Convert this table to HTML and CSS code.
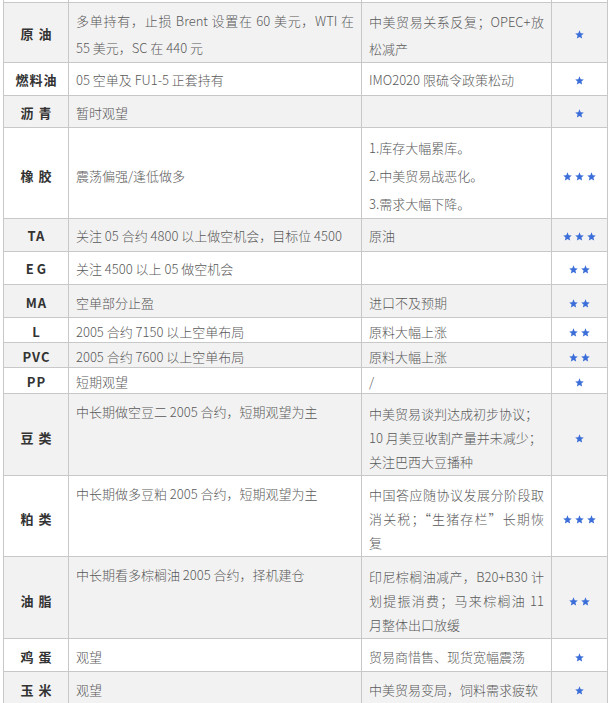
FILE: index.html
```html
<!DOCTYPE html>
<html lang="zh-CN">
<head>
<meta charset="utf-8">
<title>策略表</title>
<link rel="stylesheet" href="styles.css">
</head>
<body>
<svg class="defs" width="0" height="0" aria-hidden="true">
  <defs>
    <path id="star" d="M5 0.4 L6.35 3.55 L9.75 3.85 L7.15 6.1 L7.95 9.45 L5 7.7 L2.05 9.45 L2.85 6.1 L0.25 3.85 L3.65 3.55 Z"/>
  </defs>
</svg>
<table class="grid">
  <colgroup>
    <col class="c-name"><col class="c-plan"><col class="c-reason"><col class="c-rate">
  </colgroup>
  <tbody>
    <tr class="row cut"><td></td><td></td><td></td><td></td></tr>

    <tr class="row alt h60">
      <td class="name">原 油</td>
      <td class="txt lh27">多单持有，止损 Brent 设置在 60 美元，WTI 在 55 美元，SC 在 440 元</td>
      <td class="txt lh27 push">中美贸易关系反复；OPEC+放松减产</td>
      <td class="rate"><span class="stars"><svg viewBox="0 0 10 10"><use href="#star"/></svg></span></td>
    </tr>
    <tr class="row h33">
      <td class="name">燃料油</td>
      <td class="txt">05 空单及 FU1-5 正套持有</td>
      <td class="txt">IMO2020 限硫令政策松动</td>
      <td class="rate"><span class="stars"><svg viewBox="0 0 10 10"><use href="#star"/></svg></span></td>
    </tr>
    <tr class="row alt h32">
      <td class="name">沥 青</td>
      <td class="txt">暂时观望</td>
      <td class="txt"></td>
      <td class="rate"><span class="stars"><svg viewBox="0 0 10 10"><use href="#star"/></svg></span></td>
    </tr>
    <tr class="row h91 tall">
      <td class="name">橡 胶</td>
      <td class="txt">震荡偏强/逢低做多</td>
      <td class="txt lh28">
        <p class="para">1.库存大幅累库。</p>
        <p class="para">2.中美贸易战恶化。</p>
        <p class="para">3.需求大幅下降。</p>
      </td>
      <td class="rate"><span class="stars"><svg viewBox="0 0 10 10"><use href="#star"/></svg><svg viewBox="0 0 10 10"><use href="#star"/></svg><svg viewBox="0 0 10 10"><use href="#star"/></svg></span></td>
    </tr>
    <tr class="row alt h33">
      <td class="name">TA</td>
      <td class="txt">关注 05 合约 4800 以上做空机会，目标位 4500</td>
      <td class="txt">原油</td>
      <td class="rate"><span class="stars"><svg viewBox="0 0 10 10"><use href="#star"/></svg><svg viewBox="0 0 10 10"><use href="#star"/></svg><svg viewBox="0 0 10 10"><use href="#star"/></svg></span></td>
    </tr>
    <tr class="row h33">
      <td class="name wide">EG</td>
      <td class="txt">关注 4500 以上 05 做空机会</td>
      <td class="txt"></td>
      <td class="rate"><span class="stars"><svg viewBox="0 0 10 10"><use href="#star"/></svg><svg viewBox="0 0 10 10"><use href="#star"/></svg></span></td>
    </tr>
    <tr class="row alt h33 low">
      <td class="name">MA</td>
      <td class="txt">空单部分止盈</td>
      <td class="txt">进口不及预期</td>
      <td class="rate"><span class="stars"><svg viewBox="0 0 10 10"><use href="#star"/></svg><svg viewBox="0 0 10 10"><use href="#star"/></svg></span></td>
    </tr>
    <tr class="row h25 low">
      <td class="name">L</td>
      <td class="txt">2005 合约 7150 以上空单布局</td>
      <td class="txt">原料大幅上涨</td>
      <td class="rate"><span class="stars"><svg viewBox="0 0 10 10"><use href="#star"/></svg><svg viewBox="0 0 10 10"><use href="#star"/></svg></span></td>
    </tr>
    <tr class="row alt h25 low">
      <td class="name">PVC</td>
      <td class="txt">2005 合约 7600 以上空单布局</td>
      <td class="txt">原料大幅上涨</td>
      <td class="rate"><span class="stars"><svg viewBox="0 0 10 10"><use href="#star"/></svg><svg viewBox="0 0 10 10"><use href="#star"/></svg></span></td>
    </tr>
    <tr class="row h26">
      <td class="name">PP</td>
      <td class="txt">短期观望</td>
      <td class="txt">/</td>
      <td class="rate"><span class="stars"><svg viewBox="0 0 10 10"><use href="#star"/></svg></span></td>
    </tr>
    <tr class="row alt h82 tall">
      <td class="name">豆 类</td>
      <td class="txt top">中长期做空豆二 2005 合约，短期观望为主</td>
      <td class="txt lh24">
        <p class="para">中美贸易谈判达成初步协议；</p>
        <p class="para">10 月美豆收割产量并未减少；</p>
        <p class="para">关注巴西大豆播种</p>
      </td>
      <td class="rate"><span class="stars"><svg viewBox="0 0 10 10"><use href="#star"/></svg></span></td>
    </tr>
    <tr class="row h81 tall">
      <td class="name">粕 类</td>
      <td class="txt top">中长期做多豆粕 2005 合约，短期观望为主</td>
      <td class="txt lh24">中国答应随协议发展分阶段取消关税；“生猪存栏”长期恢复</td>
      <td class="rate"><span class="stars"><svg viewBox="0 0 10 10"><use href="#star"/></svg><svg viewBox="0 0 10 10"><use href="#star"/></svg><svg viewBox="0 0 10 10"><use href="#star"/></svg></span></td>
    </tr>
    <tr class="row alt h82 tall">
      <td class="name">油 脂</td>
      <td class="txt top">中长期看多棕榈油 2005 合约，择机建仓</td>
      <td class="txt lh24">印尼棕榈油减产，B20+B30 计划提振消费；马来棕榈油 11 月整体出口放缓</td>
      <td class="rate"><span class="stars"><svg viewBox="0 0 10 10"><use href="#star"/></svg><svg viewBox="0 0 10 10"><use href="#star"/></svg></span></td>
    </tr>
    <tr class="row h33 low">
      <td class="name">鸡 蛋</td>
      <td class="txt">观望</td>
      <td class="txt">贸易商惜售、现货宽幅震荡</td>
      <td class="rate"><span class="stars"><svg viewBox="0 0 10 10"><use href="#star"/></svg></span></td>
    </tr>
    <tr class="row alt h33 low">
      <td class="name">玉 米</td>
      <td class="txt">观望</td>
      <td class="txt">中美贸易变局，饲料需求疲软</td>
      <td class="rate"><span class="stars"><svg viewBox="0 0 10 10"><use href="#star"/></svg></span></td>
    </tr>
  </tbody>
</table>
</body>
</html>
```

FILE: styles.css
```css
html, body {
  margin: 0;
  padding: 0;
  background: #ffffff;
}

body {
  font-family: "Noto Sans CJK SC", "Noto Sans", sans-serif;
  overflow: hidden;
}

.defs {
  position: absolute;
  width: 0;
  height: 0;
}

.grid {
  border-collapse: collapse;
  table-layout: fixed;
  width: 605px;
  margin: -28px 0 0 3px;
}

.c-name { width: 65px; }
.c-plan { width: 293px; }
.c-reason { width: 190px; }
.c-rate { width: 56px; }

.grid td {
  border: 1px solid #c8c8c8;
  padding: 2px 7px 0;
  vertical-align: middle;
  font-size: 13px;
  line-height: 20px;
  color: #595959;
}

.row { background: #ffffff; }
.row.alt { background: #f2f2f2; }

.cut { height: 30px; }
.h60 { height: 60px; }
.h33 { height: 33px; }
.h32 { height: 32px; }
.h91 { height: 91px; }
.h25 { height: 25px; }
.h26 { height: 26px; }
.h82 { height: 82px; }
.h81 { height: 81px; }

.grid .low td { padding-top: 4px; }
.grid .tall td { padding-top: 6px; }

.grid td.name {
  padding-left: 1px;
  padding-right: 0;
  text-align: center;
  font-weight: 700;
  font-size: 13px;
  letter-spacing: 1px;
  color: #333333;
  white-space: nowrap;
}

.grid td.name.wide {
  letter-spacing: 3px;
  padding-left: 3px;
}

.grid td.txt {
  text-align: justify;
  font-weight: 300;
}

.grid td.lh27 { line-height: 27px; }
.grid td.lh28 { line-height: 28px; }
.grid td.lh24 { line-height: 24px; }
.grid td.push { padding-top: 5px; }

.grid td.top {
  vertical-align: top;
  line-height: 24px;
}

.para {
  margin: 0;
}

.grid td.rate {
  text-align: center;
  padding-left: 0;
  padding-right: 0;
  line-height: 10px;
}

.stars {
  display: inline-flex;
  gap: 3px;
  vertical-align: middle;
}

.stars svg {
  width: 9px;
  height: 9px;
  fill: #3b6ed8;
}
```
